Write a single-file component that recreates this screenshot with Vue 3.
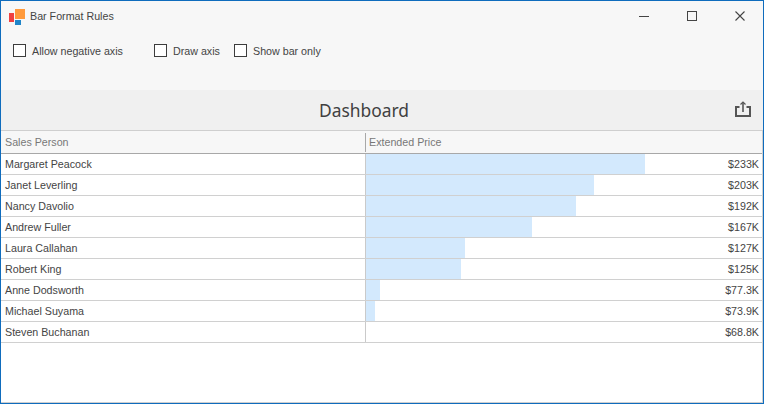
<script setup>
const options = [
  { label: 'Allow negative axis', width: 141 },
  { label: 'Draw axis', width: 80 },
  { label: 'Show bar only', width: 100 }
]
const rows = [
  { name: 'Margaret Peacock', bar: 279, value: '$233K' },
  { name: 'Janet Leverling', bar: 228, value: '$203K' },
  { name: 'Nancy Davolio', bar: 210, value: '$192K' },
  { name: 'Andrew Fuller', bar: 166, value: '$167K' },
  { name: 'Laura Callahan', bar: 99, value: '$127K' },
  { name: 'Robert King', bar: 95, value: '$125K' },
  { name: 'Anne Dodsworth', bar: 14, value: '$77.3K' },
  { name: 'Michael Suyama', bar: 9, value: '$73.9K' },
  { name: 'Steven Buchanan', bar: 0, value: '$68.8K' }
]
</script>

<template>
  <div class="window">
    <header class="titlebar">
      <svg class="logo" width="16" height="16" viewBox="0 0 16 16">
        <rect x="0" y="4" width="5" height="9" fill="#f04040" />
        <rect x="6" y="0" width="10" height="10" fill="#ff9a3c" />
        <rect x="6" y="11" width="6" height="5" fill="#1f85c9" />
      </svg>
      <span class="title">Bar Format Rules</span>
      <div class="controls">
        <svg width="10" height="10" viewBox="0 0 10 10"><path d="M0 5.5H10" stroke="#444" fill="none" /></svg>
        <svg width="10" height="10" viewBox="0 0 10 10"><rect x=".5" y=".5" width="9" height="9" stroke="#444" fill="none" /></svg>
        <svg width="10" height="10" viewBox="0 0 10 10"><path d="M.5 .5L9.5 9.5M9.5 .5L.5 9.5" stroke="#444" stroke-width="1.1" fill="none" /></svg>
      </div>
    </header>
    <div class="options">
      <label v-for="o in options" :key="o.label" class="option" :style="{ width: o.width + 'px' }">
        <span class="box"></span>
        <span>{{ o.label }}</span>
      </label>
    </div>
    <div class="dash-head">
      <span class="dash-title">Dashboard</span>
      <svg class="share" width="16" height="16" viewBox="0 0 16 16">
        <path d="M4.5 6H1V15H15V6H11.5" stroke="#555" stroke-width="2" fill="none" />
        <path d="M8 11V1.5" stroke="#555" stroke-width="1.6" fill="none" />
        <path d="M5.5 3.5L8 1L10.5 3.5" stroke="#555" stroke-width="1.2" fill="none" />
      </svg>
    </div>
    <div class="grid">
      <div class="row head">
        <div class="name">Sales Person</div>
        <div class="price"><span class="head-text">Extended Price</span></div>
      </div>
      <div v-for="r in rows" :key="r.name" class="row">
        <div class="name">{{ r.name }}</div>
        <div class="price">
          <div class="bar" :style="{ width: r.bar + 'px' }"></div>
          <span class="value">{{ r.value }}</span>
        </div>
      </div>
    </div>
  </div>
</template>

<style>
html, body { margin: 0; background: #fff; }
</style>

<style scoped>
.window {
  width: 764px;
  height: 404px;
  box-sizing: border-box;
  border: 1px solid #0f6cbd;
  display: flex;
  flex-direction: column;
  background: #fff;
  font-family: "Liberation Sans", sans-serif;
  font-size: 10.7px;
  color: #444;
  overflow: hidden;
}
.titlebar {
  height: 30px;
  flex: none;
  background: #f7f7f7;
  display: flex;
  align-items: center;
  padding-left: 8px;
}
.logo { margin-top: 1px; }
.title { margin-left: 5px; }
.controls {
  margin-left: auto;
  margin-right: 18px;
  display: flex;
  gap: 38px;
}
.options {
  height: 59px;
  flex: none;
  background: #f7f7f7;
  display: flex;
  padding: 13px 0 0 12px;
  box-sizing: border-box;
}
.option {
  display: flex;
  align-items: flex-start;
  gap: 6px;
  line-height: 15px;
}
.box {
  width: 13px;
  height: 13px;
  box-sizing: border-box;
  border: 1px solid #3c3c3c;
  background: #fff;
  flex: none;
}
.dash-head {
  height: 41px;
  flex: none;
  box-sizing: border-box;
  background: #f0f0f0;
  border-bottom: 1px solid #cfcfcf;
  display: flex;
  align-items: center;
  justify-content: center;
  padding-right: 36px;
  position: relative;
}
.dash-title {
  font-family: "Noto Sans", sans-serif;
  font-size: 17.4px;
  color: #404040;
}
.share {
  position: absolute;
  right: 12px;
  top: 11px;
}
.grid {
  flex: 1;
  border-right: 1px solid #cfcfcf;
  border-bottom: 1px solid #cfcfcf;
}
.row {
  display: flex;
  height: 21px;
  box-sizing: border-box;
  border-bottom: 1px solid #d0d0d0;
}
.row.head {
  height: 23px;
  background: #f7f7f7;
  border-bottom: 1px solid #a8a8a8;
  color: #777;
}
.name {
  width: 364px;
  flex: none;
  box-sizing: border-box;
  padding-left: 4px;
  line-height: 20px;
}
.head .name { line-height: 22px; }
.price {
  flex: 1;
  position: relative;
  border-left: 1px solid #cacaca;
  line-height: 20px;
  padding: 0 3px;
  text-align: right;
}
.head .price {
  text-align: left;
  line-height: 22px;
  border-left-color: transparent;
}
.head .price::before {
  content: "";
  position: absolute;
  left: -1px;
  top: 2px;
  bottom: 1px;
  width: 1px;
  background: #a8a8a8;
}
.bar {
  position: absolute;
  left: 0;
  top: 0;
  bottom: 0;
  background: #d3e9fd;
}
.value { position: relative; }
</style>
